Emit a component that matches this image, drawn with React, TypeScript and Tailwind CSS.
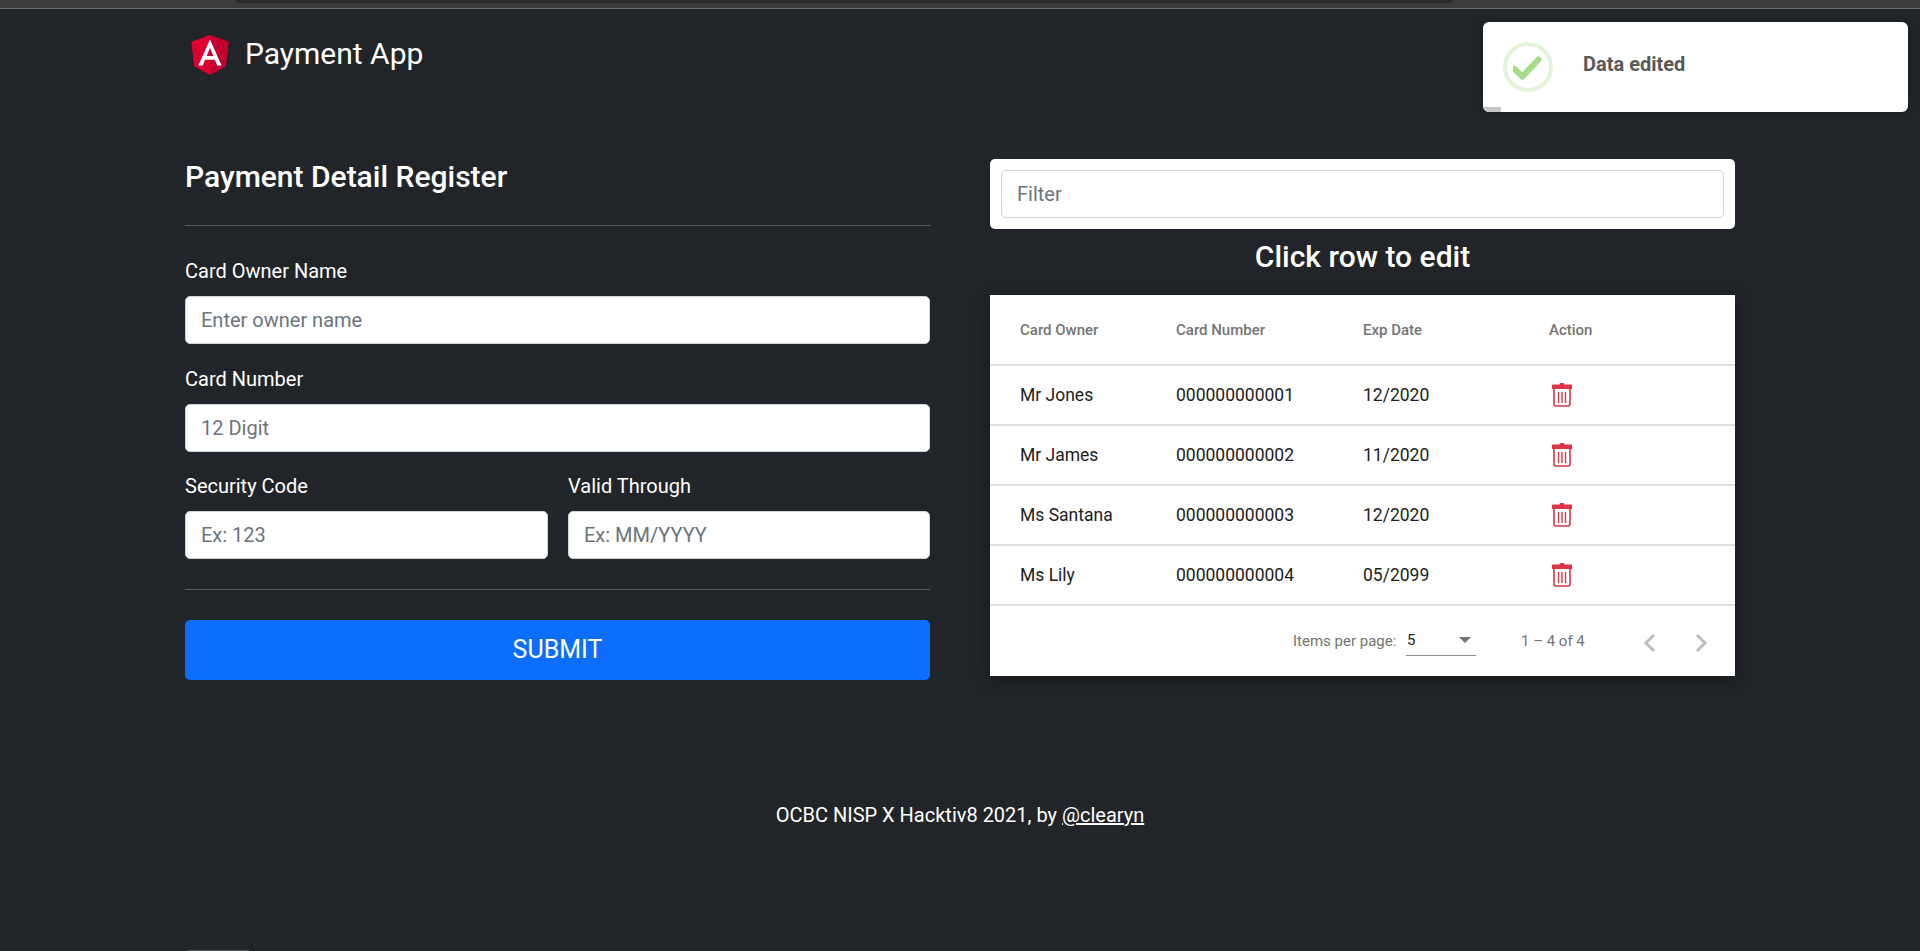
import React from "react";

const font = { fontFamily: "Roboto, sans-serif" };

function Trash() {
  return (
    <svg width="22" height="24" viewBox="0 0 22 24" fill="none">
      <path d="M8.5 1.5 C8.5 .6 9.2 0 10 0 H12 C12.8 0 13.5 .6 13.5 1.5 H20 C20.6 1.5 21 1.9 21 2.5 V6 H1 V2.5 C1 1.9 1.4 1.5 2 1.5 Z" fill="#dc3545" />
      <path d="M3 6 V21 C3 22.2 3.8 23 5 23 H17 C18.2 23 19 22.2 19 21 V6" stroke="#dc3545" strokeWidth="1.6" />
      <path d="M7.5 9 V20 M11 9 V20 M14.5 9 V20" stroke="#dc3545" strokeWidth="1.4" />
    </svg>
  );
}

function Logo() {
  return (
    <svg width="50" height="50" viewBox="0 0 250 250">
      <polygon fill="#DD0031" points="125,30 31.9,63.2 46.1,186.3 125,230 203.9,186.3 218.1,63.2" />
      <polygon fill="#C3002F" points="125,30 125,52.2 125,230 203.9,186.3 218.1,63.2" />
      <path fill="#FFFFFF" d="M125,52.1L66.8,182.6h21.7l11.7-29.2h49.4l11.7,29.2h21.7L125,52.1z M142,135.4H108l17-40.9L142,135.4z" />
    </svg>
  );
}

function Field({ label, placeholder, className }: { label: string; placeholder: string; className?: string }) {
  return (
    <div className={className}>
      <div className="h-[24px] text-[20px] leading-[24px] text-white">{label}</div>
      <input
        readOnly
        placeholder={placeholder}
        className="mt-[13px] block h-[48px] w-full rounded-[5px] border border-[#ced4da] bg-white px-[15px] text-[20px] text-[#212529] placeholder:text-[#6c757d] outline-none"
      />
    </div>
  );
}

const rows = [
  ["Mr Jones", "000000000001", "12/2020"],
  ["Mr James", "000000000002", "11/2020"],
  ["Ms Santana", "000000000003", "12/2020"],
  ["Ms Lily", "000000000004", "05/2099"],
];

export default function App() {
  return (
    <div className="relative h-[951px] w-full overflow-hidden bg-[#212529]" style={font}>
      <div className="relative h-[9px] border-b border-[#6e6e6e] bg-[#3b3b3b]">
        <div className="absolute left-[236px] top-0 h-[3px] w-[1217px] rounded-b-[4px] bg-[#2a2a2a]" />
      </div>

      <header className="mt-[20px] flex h-[50px] items-center pl-[185px]">
        <Logo />
        <span className="ml-[10px] text-[30px] leading-[52px] text-white">Payment App</span>
      </header>

      <main className="mt-[80px] flex justify-between px-[185px]">
        <section className="w-[745px]">
          <h2 className="h-[36px] text-[30px] font-medium leading-[36px] text-white">Payment Detail Register</h2>
          <div className="mt-[30px] h-px bg-[#5a5d60]" />
          <Field className="mt-[33px]" label="Card Owner Name" placeholder="Enter owner name" />
          <Field className="mt-[23px]" label="Card Number" placeholder="12 Digit" />
          <div className="mt-[22px] flex justify-between">
            <Field className="w-[363px]" label="Security Code" placeholder="Ex: 123" />
            <Field className="w-[362px]" label="Valid Through" placeholder="Ex: MM/YYYY" />
          </div>
          <div className="mt-[30px] h-px bg-[#5a5d60]" />
          <button className="mt-[30px] block h-[60px] w-full rounded-[5px] bg-[#0d6efd] text-center text-[25px] text-white">
            SUBMIT
          </button>
        </section>

        <section className="w-[745px]">
          <div className="flex h-[70px] items-center rounded-[5px] bg-white px-[11px]">
            <input
              readOnly
              placeholder="Filter"
              className="block h-[48px] w-full rounded-[5px] border border-[#ced4da] bg-white px-[15px] text-[20px] placeholder:text-[#6c757d] outline-none"
            />
          </div>
          <h2 className="mt-[10px] h-[36px] text-center text-[30px] font-medium leading-[36px] text-white">
            Click row to edit
          </h2>
          <div className="mt-[20px] bg-white shadow-[0_4px_16px_rgba(0,0,0,0.35)]">
            <div className="grid h-[71px] grid-cols-[186px_187px_186px_186px] items-center border-b-2 border-[#e0e0e0] pt-[2px] text-[15px] font-medium text-[#757575]">
              <div className="pl-[30px]">Card Owner</div>
              <div>Card Number</div>
              <div>Exp Date</div>
              <div>Action</div>
            </div>
            {rows.map((r) => (
              <div
                key={r[0]}
                className="grid h-[60px] grid-cols-[186px_187px_186px_186px] items-center border-b-2 border-[#e0e0e0] text-[17.5px] text-[#212121]"
              >
                <div className="pl-[30px]">{r[0]}</div>
                <div>{r[1]}</div>
                <div>{r[2]}</div>
                <div className="pl-[2px]">
                  <Trash />
                </div>
              </div>
            ))}
            <div className="flex h-[70px] items-center pl-[303px] text-[15px] text-[#757575]">
              <span className="w-[103px] whitespace-nowrap">Items per page:</span>
              <div className="relative mb-[1px] ml-[10px] flex h-[31px] w-[70px] items-center border-b border-[#8c8c8c] text-[#212121]">
                <span className="pl-px">5</span>
                <span className="absolute right-[5px] top-[12px] h-0 w-0 border-x-[6.5px] border-t-[6.5px] border-x-transparent border-t-[#757575]" />
              </div>
              <span className="ml-[45px] w-[64px] whitespace-nowrap">1 – 4 of 4</span>
              <svg className="ml-[55px] mt-[3px]" width="20" height="24" viewBox="0 0 20 24" fill="none">
                <path d="M14 4 L6 12 L14 20" stroke="#bdbdbd" strokeWidth="3" />
              </svg>
              <svg className="ml-[31px] mt-[3px]" width="20" height="24" viewBox="0 0 20 24" fill="none">
                <path d="M6 4 L14 12 L6 20" stroke="#bdbdbd" strokeWidth="3" />
              </svg>
            </div>
          </div>
        </section>
      </main>

      <footer className="mt-[123px] h-[24px] text-center text-[20px] leading-[24px] text-white">
        OCBC NISP X Hacktiv8 2021, by <a className="underline">@clearyn</a>
      </footer>

      <div className="absolute left-[1483px] top-[22px] h-[90px] w-[425px] overflow-hidden rounded-[6px] bg-white shadow-[0_0_10px_rgba(0,0,0,0.25)]">
        <div className="absolute left-[20px] top-[20px] flex h-[50px] w-[50px] items-center justify-center rounded-full border-[4px] border-[#e4f4dc]">
          <svg width="30" height="26" viewBox="0 0 30 26" fill="none">
            <path d="M1.5 15 L9.5 22.5 L25.5 5.5" stroke="#a5dc86" strokeWidth="6" strokeLinecap="round" />
          </svg>
        </div>
        <div className="absolute left-[100px] top-[29px] text-[20px] font-bold leading-[26px] text-[#595959]">Data edited</div>
        <div className="absolute bottom-0 left-0 h-[5px] w-[18px] bg-[#c6c6c6]" />
      </div>

      <div className="absolute bottom-0 left-[188px] h-px w-[61px] bg-[#56565e]" />
    </div>
  );
}
